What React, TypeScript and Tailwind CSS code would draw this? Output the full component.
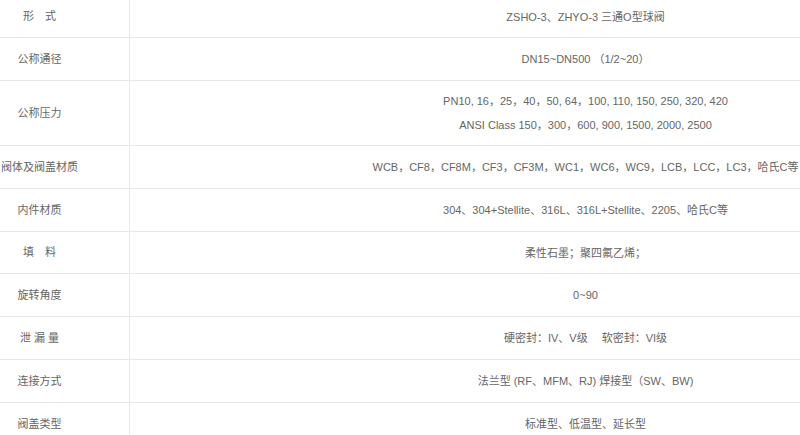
const rows: { label: string; value: string[]; h: string }[] = [
  { label: '形　式', value: ['ZSHO-3、ZHYO-3 三通O型球阀'], h: 'h-[42px]' },
  { label: '公称通径', value: ['DN15~DN500 （1/2~20）'], h: 'h-[43px]' },
  {
    label: '公称压力',
    value: [
      'PN10, 16，25，40，50, 64，100, 110, 150, 250, 320, 420',
      'ANSI Class 150，300，600, 900, 1500, 2000, 2500',
    ],
    h: 'h-[65px]',
  },
  { label: '阀体及阀盖材质', value: ['WCB，CF8，CF8M，CF3，CF3M，WC1，WC6，WC9，LCB，LCC，LC3，哈氏C等'], h: 'h-[43px]' },
  { label: '内件材质', value: ['304、304+Stellite、316L、316L+Stellite、2205、哈氏C等'], h: 'h-[43px]' },
  { label: '填　料', value: ['柔性石墨；聚四氟乙烯；'], h: 'h-[42px]' },
  { label: '旋转角度', value: ['0~90'], h: 'h-[43px]' },
  { label: '泄 漏 量', value: ['硬密封：IV、V级　 软密封：VI级'], h: 'h-[43px]' },
  { label: '连接方式', value: ['法兰型 (RF、MFM、RJ) 焊接型（SW、BW)'], h: 'h-[43px]' },
  { label: '阀盖类型', value: ['标准型、低温型、延长型'], h: 'h-[43px]' },
];

export default function App() {
  return (
    <div
      className="w-[800px] h-[435px] overflow-hidden bg-white text-[11px] text-[#666]"
      style={{ fontFamily: '"Liberation Sans", Arial, "Noto Sans CJK SC", sans-serif' }}
    >
      <div className="-ml-[50px] -mt-[4px] w-[1091px]">
        {rows.map((row, i) => (
          <div key={i} className={`flex border-b border-[#e8e8e8] ${row.h}`}>
            <div className="w-[180px] shrink-0 flex items-center justify-center border-r border-[#e8e8e8]">
              {row.label}
            </div>
            <div className="flex-1 flex flex-col items-center justify-center leading-[24px]">
              {row.value.map((v, j) => (
                <div key={j} className="whitespace-pre">
                  {v}
                </div>
              ))}
            </div>
          </div>
        ))}
      </div>
    </div>
  );
}
